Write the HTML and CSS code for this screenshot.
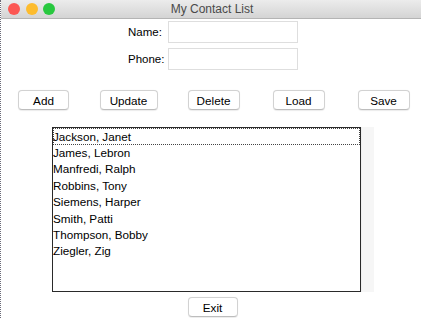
FILE: index.html
```html
<!DOCTYPE html>
<html lang="en">
  <head>
    <meta charset="UTF-8" />
    <title>My Contact List</title>
    <link rel="stylesheet" href="styles.css">
  </head>
  <body>
    <div class="window">
      <header class="titlebar">
        <div class="lights">
          <span class="light red"></span>
          <span class="light yellow"></span>
          <span class="light green"></span>
        </div>
        <h1>My Contact List</h1>
      </header>

      <form class="fields">
        <label for="name">Name:</label>
        <input type="text" id="name" />
        <label for="phone">Phone:</label>
        <input type="text" id="phone" />
      </form>

      <div class="actions">
        <div class="cell"><button class="btn w-add">Add</button></div>
        <div class="cell"><button class="btn w-update">Update</button></div>
        <div class="cell"><button class="btn">Delete</button></div>
        <div class="cell"><button class="btn">Load</button></div>
        <div class="cell"><button class="btn">Save</button></div>
      </div>

      <div class="list-wrap">
        <ul class="listbox">
          <li class="focus">Jackson, Janet</li>
          <li>James, Lebron</li>
          <li>Manfredi, Ralph</li>
          <li>Robbins, Tony</li>
          <li>Siemens, Harper</li>
          <li>Smith, Patti</li>
          <li>Thompson, Bobby</li>
          <li>Ziegler, Zig</li>
        </ul>
        <div class="scroll-track"></div>
      </div>

      <div class="footer">
        <button class="btn w-exit">Exit</button>
      </div>
    </div>
  </body>
</html>
```

FILE: styles.css
```css
* {
  box-sizing: border-box;
  margin: 0;
  padding: 0;
}

body {
  font-family: "Liberation Sans", Arial, sans-serif;
  color: #000;
  background-color: #fff;
  width: 421px;
  height: 318px;
  overflow: hidden;
}

.window {
  height: 318px;
  border-left: 1px dotted #6b6b78;
}

.titlebar {
  position: relative;
  height: 19px;
  background: linear-gradient(#ececec, #d4d4d4);
  border-bottom: 1px solid #b4b4b4;
  text-align: center;
}

.titlebar h1 {
  font-size: 12px;
  font-weight: normal;
  color: #4a4a4a;
  line-height: 18px;
  padding-left: 2px;
}

.lights {
  position: absolute;
  left: 7px;
  top: 3px;
  display: flex;
  gap: 5.5px;
}

.light {
  width: 12px;
  height: 12px;
  border-radius: 50%;
}

.red { background-color: #fc5753; }
.yellow { background-color: #fdbc2e; }
.green { background-color: #28c83f; }

.fields {
  display: grid;
  grid-template-columns: 36px 130px;
  column-gap: 4px;
  row-gap: 5px;
  align-items: center;
  margin: 2px 0 0 127px;
  font-size: 11.5px;
}

.fields input {
  height: 22px;
  border: 1px solid #dedede;
  background: #fff;
}

.actions {
  display: grid;
  grid-template-columns: repeat(5, 85px);
  margin-top: 20px;
}

.cell {
  display: flex;
  justify-content: center;
}

.btn {
  width: 52px;
  height: 20px;
  font-family: "Liberation Sans", Arial, sans-serif;
  font-size: 11.7px;
  color: #000;
  background: #fff;
  border: 1px solid #d2d2d2;
  border-bottom-color: #bdbdbd;
  border-radius: 4px;
  box-shadow: 0 0.5px 1px rgba(0, 0, 0, 0.08);
}

.w-add { width: 51px; }
.w-update { width: 58px; }
.w-exit { width: 50px; }

.list-wrap {
  display: flex;
  margin: 17px 0 0 51px;
  height: 165px;
}

.listbox {
  list-style: none;
  width: 309px;
  height: 165px;
  border: 1px solid #2a2a2a;
  font-size: 11.7px;
  line-height: 16.4px;
}

.listbox li {
  height: 16.4px;
}

.listbox .focus {
  outline: 1px dotted #444;
  outline-offset: -1px;
  height: 17px;
  line-height: 17px;
}

.scroll-track {
  width: 13px;
  background-color: #f6f6f6;
  border-left: 1px solid #efefef;
}

.footer {
  display: flex;
  justify-content: center;
  padding-left: 3px;
  margin-top: 5px;
}
```
